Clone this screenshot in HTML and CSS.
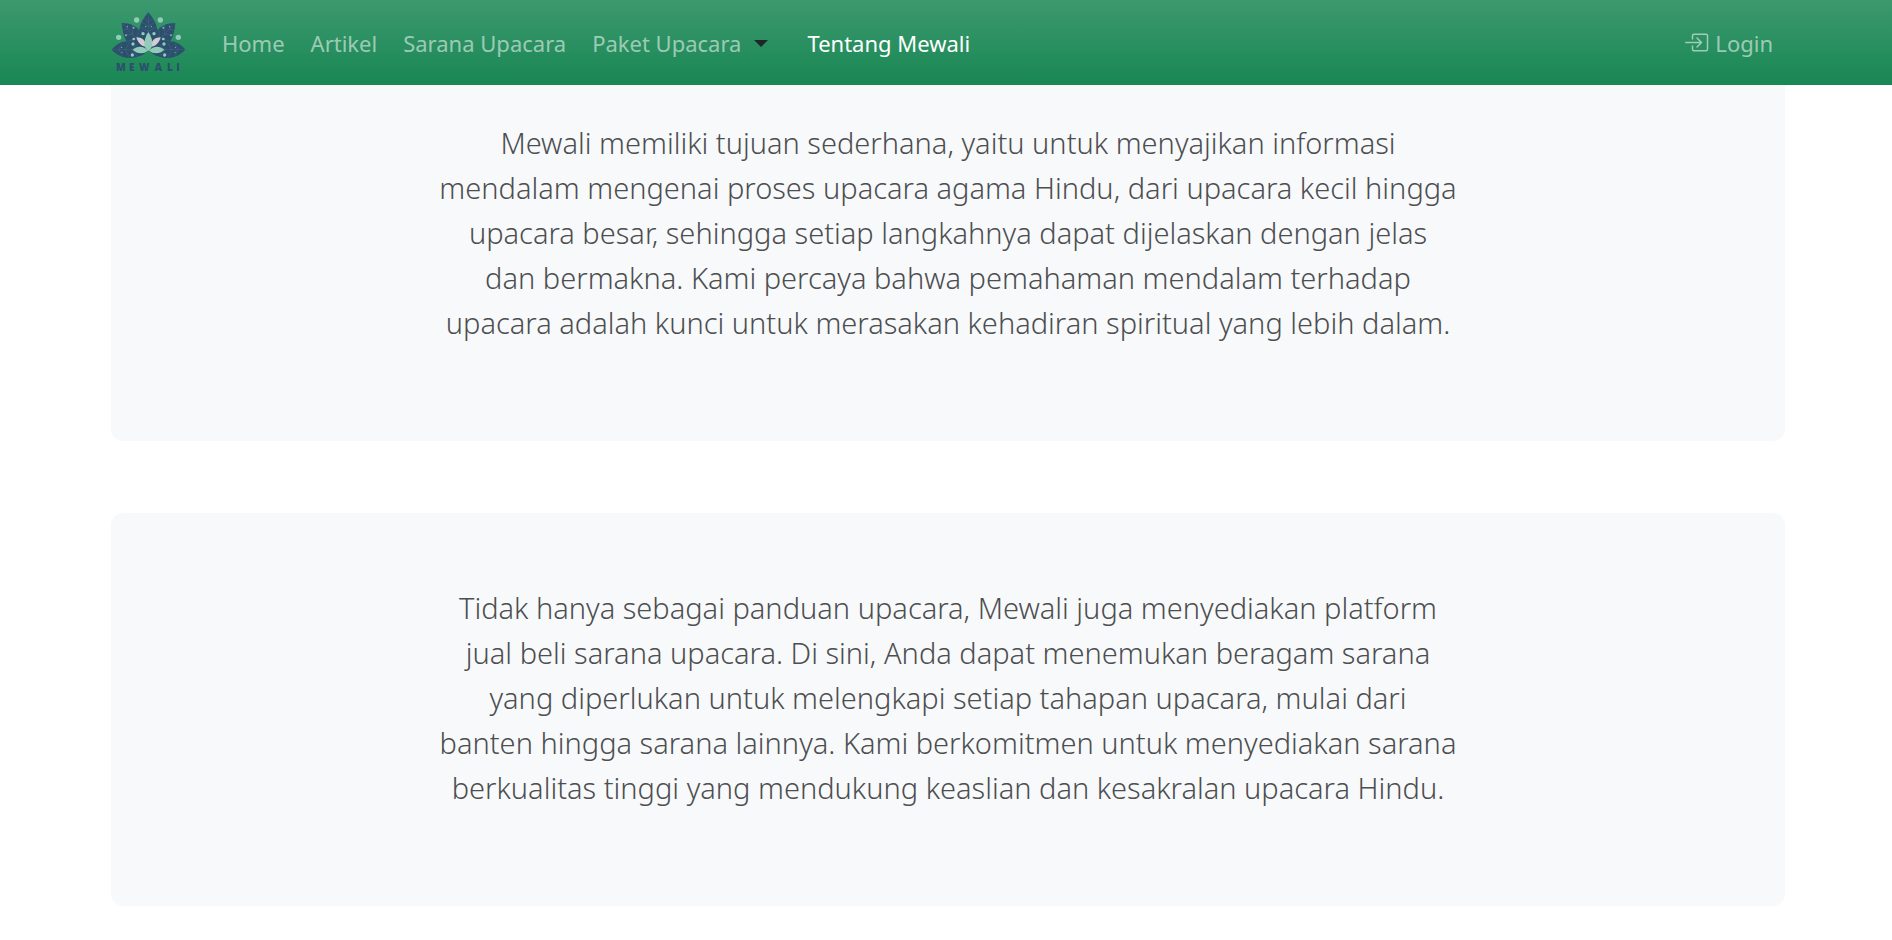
FILE: index.html
```html
<!DOCTYPE html>
<html lang="id">
<head>
<meta charset="utf-8">
<meta name="viewport" content="width=device-width, initial-scale=1">
<title>Tentang Mewali</title>
<link rel="stylesheet" href="styles.css">
</head>
<body>
<header class="navbar">
  <a class="brand" href="#" aria-label="Mewali">
    <svg class="logo" viewBox="30 34 228 186" aria-hidden="true">
      <g fill="#2c4f6e">
        <path d="M145 34C162 55 174 76 172 98C171 122 158 138 145 151C132 138 119 122 118 98C116 76 128 55 145 34Z"/>
        <g id="side">
          <path d="M65 67C91 67 112 77 124 95C135 112 142 132 144 151C116 150 91 141 79 121C69 104 67 84 65 67Z"/>
          <path d="M35 147C49 130 67 120 88 122C111 125 132 137 145 149C133 163 114 171 93 172C68 172 48 161 35 147Z"/>
        </g>
        <use href="#side" transform="translate(291 0) scale(-1 1)"/>
      </g>
      <path d="M145 36V100M145 64L132 52M145 64L158 52M145 78L126 64M145 78L164 64M145 92L120 78M145 92L170 78M145 105L121 92M145 105L170 92" fill="none" stroke="#55788c" stroke-width="1"/>
      <g id="detail">
        <path d="M67 69L142 148M83 86V72M83 86L70 88M98 101L97 74M98 101L71 103M112 116L115 84M112 116L80 121M37 147H142M57 147L66 128M57 147L66 165M76 147L88 125M76 147L88 171M96 147L112 130M96 147L112 168" fill="none" stroke="#55788c" stroke-width="1"/>
        <path d="M109 110C126 110 137 119 140 139C124 137 114 128 109 110Z" fill="#d3cdd3"/>
        <path d="M98 147C113 133 132 136 144 150C131 161 111 160 98 147Z" fill="#92cbb9"/>
        <g fill="#92cbb9">
          <circle cx="110" cy="58" r="8"/><circle cx="56" cy="110" r="8"/>
          <circle cx="99" cy="130" r="5"/><circle cx="97" cy="163" r="5"/>
          <circle cx="129" cy="99" r="5"/><circle cx="101" cy="115" r="4"/>
        </g>
        <g fill="#8fa9b8">
          <circle cx="82" cy="78" r="2"/><circle cx="101" cy="81" r="3"/><circle cx="78" cy="104" r="3"/>
          <circle cx="65" cy="140" r="2"/><circle cx="66" cy="155" r="2"/><circle cx="137" cy="78" r="2"/>
        </g>
      </g>
      <use href="#detail" transform="translate(291 0) scale(-1 1)"/>
      <path d="M145 94C154 107 158 120 157 131C156 141 151 147 145 151C139 147 134 141 133 131C133 120 136 107 145 94Z" fill="#92cbb9"/>
      <text class="wordmark" x="48 87 117 164 201 229" y="211">MEWALI</text>
    </svg>
  </a>
  <nav class="menu" aria-label="Utama">
    <a class="link" href="#">Home</a>
    <a class="link" href="#">Artikel</a>
    <a class="link" href="#">Sarana Upacara</a>
    <div class="split">
      <a class="link" href="#">Paket Upacara</a>
      <button class="toggle" type="button" aria-label="Buka menu Paket Upacara"></button>
    </div>
    <a class="link active" href="#" aria-current="page">Tentang Mewali</a>
  </nav>
  <a class="link login" href="#">
    <svg class="login-icon" viewBox="0 0 16 16" fill="currentColor" aria-hidden="true">
      <path fill-rule="evenodd" d="M4.500 5V2.500A1.500 1.500 0 0 1 6 1h8a1.500 1.500 0 0 1 1.500 1.500v9A1.500 1.500 0 0 1 14 13H6a1.500 1.500 0 0 1-1.500-1.500V9h1v2.500a.5.5 0 0 0 .5.5h8a.5.5 0 0 0 .5-.5v-9a.5.5 0 0 0-.5-.5H6a.5.5 0 0 0-.5.5V5z"/>
      <path d="M7.650 3.650a.5.5 0 0 1 .7 0l3 3a.5.5 0 0 1 0 .7l-3 3a.5.5 0 0 1-.7-.7L9.800 7.500H.5a.5.5 0 0 1 0-1h9.300L7.650 4.350a.5.5 0 0 1 0-.7z"/>
    </svg>
    Login
  </a>
</header>
<main class="content">
  <section class="card">
    <p class="lead">Mewali memiliki tujuan sederhana, yaitu untuk menyajikan informasi<br>mendalam mengenai proses upacara agama Hindu, dari upacara kecil hingga<br>upacara besar, sehingga setiap langkahnya dapat dijelaskan dengan jelas<br>dan bermakna. Kami percaya bahwa pemahaman mendalam terhadap<br>upacara adalah kunci untuk merasakan kehadiran spiritual yang lebih dalam.</p>
  </section>
  <section class="card">
    <p class="lead">Tidak hanya sebagai panduan upacara, Mewali juga menyediakan platform<br>jual beli sarana upacara. Di sini, Anda dapat menemukan beragam sarana<br>yang diperlukan untuk melengkapi setiap tahapan upacara, mulai dari<br>banten hingga sarana lainnya. Kami berkomitmen untuk menyediakan sarana<br>berkualitas tinggi yang mendukung keaslian dan kesakralan upacara Hindu.</p>
  </section>
</main>
</body>
</html>
```
FILE: styles.css
```css
* {
  box-sizing: border-box;
}

body {
  margin: 0;
  background: #fff;
  color: #212529;
  font-family: "Noto Sans", "Open Sans", sans-serif;
  font-size: 24px;
  line-height: 36px;
}

.navbar {
  position: fixed;
  top: 0;
  left: 0;
  right: 0;
  z-index: 10;
  display: flex;
  align-items: center;
  height: 85px;
  padding: 0 119px 0 110px;
  background: linear-gradient(180deg, #3c996e, #198754);
}

.brand {
  display: flex;
  margin-right: 36px;
}

.logo {
  width: 76px;
  height: 62px;
}

.wordmark {
  fill: #2c4f6e;
  font-family: "Open Sans", sans-serif;
  font-size: 30px;
  font-weight: 800;
}

.menu {
  display: flex;
  align-items: center;
  gap: 26px;
  padding-top: 1px;
}

.link {
  color: rgba(255, 255, 255, 0.55);
  font-size: 22px;
  text-decoration: none;
  white-space: nowrap;
}

.active {
  color: #fff;
}

.split {
  display: flex;
  align-items: center;
}

.toggle {
  padding: 12px 13px;
  border: 0;
  background: none;
}

.toggle::after {
  content: "";
  display: block;
  border-top: 7px solid #212529;
  border-left: 7px solid transparent;
  border-right: 7px solid transparent;
}

.login {
  display: flex;
  align-items: center;
  gap: 6px;
  margin-left: auto;
  padding-top: 1px;
}

.login-icon {
  width: 24px;
  height: 24px;
  margin-top: 2px;
}

.content {
  display: grid;
  gap: 72px;
  padding: 48px 107px 34px 111px;
}

.card {
  padding: 72px 18px;
  border-radius: 12px;
  background: #f8f9fb;
}

.lead {
  margin: 0 0 24px;
  color: #4c4e50;
  font-size: 29px;
  font-weight: 300;
  line-height: 45px;
  text-align: center;
}
```
